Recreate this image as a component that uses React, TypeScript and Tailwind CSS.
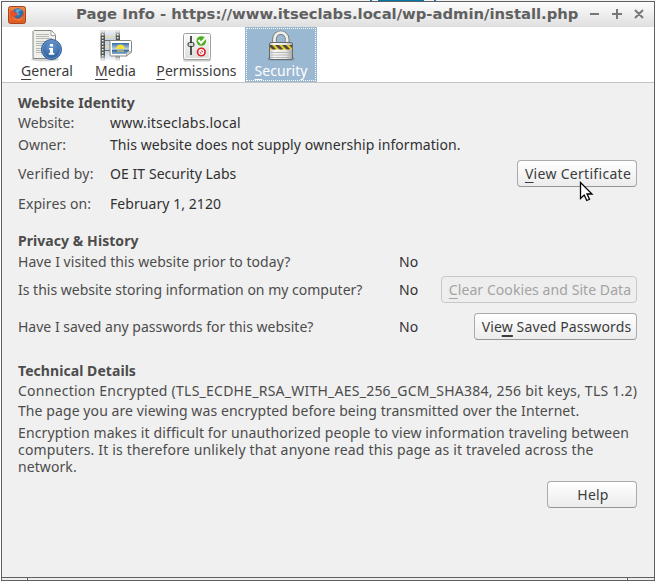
import type { ReactNode } from 'react';

function Key({ children, thick }: { children: ReactNode; thick?: boolean }) {
  return <span className={`underline underline-offset-[3px] ${thick ? 'decoration-2' : 'decoration-1'}`}>{children}</span>;
}

function FirefoxIcon() {
  return (
    <svg width="18" height="18" viewBox="0 0 18 18" className="shrink-0">
      <defs>
        <linearGradient id="ffbg" x1="0" y1="0" x2="0" y2="1">
          <stop offset="0" stopColor="#ef8a45" />
          <stop offset="1" stopColor="#dc5a22" />
        </linearGradient>
      </defs>
      <rect x="0.5" y="0.5" width="17" height="17" rx="2" fill="url(#ffbg)" stroke="#a8441f" />
      <circle cx="9.800" cy="8.500" r="6.200" fill="#2f6ea6" />
      <path d="M7 4c2-1.500 5-1.500 7 .5-1.500-.3-3 .5-3.500 2L12 8.500l-2.500 1L8 6z" fill="#5ba3d6" />
      <path d="M2.500 3.500L4 5l2-.5.800 2 3.200 1-1.500 2-2 .8c1.200 2.500 4 2.700 6 1.300 2-1.400 3-4 2.500-6.600 2 3.500 1 8-2.500 9.600-4.500 2-9.500-.5-10.200-5.100C2 7.500 2 5.500 2.500 3.500z" fill="#e5502a" />
      <path d="M3.500 10c1 3.500 5 5.500 9 4 2-1 3-3 3-5-1 3-4 5-7 4.200-2-.5-3-1.700-5-3.200z" fill="#f08a38" />
    </svg>
  );
}

function GeneralIcon() {
  return (
    <svg width="32" height="33" viewBox="0 0 32 33">
      <defs>
        <radialGradient id="info" cx=".5" cy=".3" r=".7">
          <stop offset="0" stopColor="#6c9bd2" />
          <stop offset="1" stopColor="#285895" />
        </radialGradient>
      </defs>
      <ellipse cx="14" cy="30.500" rx="14" ry="1.800" fill="#000" opacity=".18" />
      <path d="M3 1.500h17.500L24.500 6v23.500H2V2.500z" fill="#eff0ec" stroke="#858780" />
      <path d="M20 2v4.500h4.500" fill="#fff" stroke="#a1a39c" />
      <path d="M5 5.500h13M5 7.500h13M5 9.500h16M5 12.500h16M5 14.500h16M5 16.500h9M5 19.500h16M5 21.500h10M5 23.500h10" stroke="#b6b9b1" />
      <circle cx="20.500" cy="20.500" r="10" fill="url(#info)" stroke="#285492" />
      <circle cx="20.500" cy="20.500" r="9" fill="none" stroke="#7ba5d8" strokeWidth=".7" />
      <path d="M19 15h3v2.500h-3zM18 19h4v5h1.300v1.700h-5.500V24H19v-3.400h-1z" fill="#fff" />
    </svg>
  );
}

function MediaIcon() {
  return (
    <svg width="34" height="33" viewBox="0 0 34 33">
      <defs>
        <linearGradient id="film" x1="0" y1="0" x2="0" y2="1">
          <stop offset="0" stopColor="#888a85" stopOpacity=".15" />
          <stop offset=".2" stopColor="#555753" />
          <stop offset=".8" stopColor="#555753" />
          <stop offset="1" stopColor="#888a85" stopOpacity=".1" />
        </linearGradient>
        <linearGradient id="frames" x1="0" y1="0" x2="0" y2="1">
          <stop offset="0" stopColor="#c6d3e3" stopOpacity=".3" />
          <stop offset=".3" stopColor="#c6d3e3" />
          <stop offset=".7" stopColor="#c6d3e3" />
          <stop offset="1" stopColor="#c6d3e3" stopOpacity=".2" />
        </linearGradient>
        <linearGradient id="sky" x1="0" y1="0" x2="0" y2="1">
          <stop offset="0" stopColor="#326baa" />
          <stop offset=".58" stopColor="#c6dce7" />
          <stop offset=".62" stopColor="#2c6095" />
          <stop offset="1" stopColor="#8baecb" />
        </linearGradient>
      </defs>
      <path d="M1.500 1h4.500v31H1.500zM16.500 1h4.500v31h-4.500z" fill="url(#film)" />
      <path d="M3.700 2v29M18.700 2v29" stroke="#f1f2ef" strokeWidth="1.600" strokeDasharray="1.500 1.500" />
      <path d="M6 1h10.500v30H6z" fill="url(#frames)" />
      <path d="M6 8h10M6 18h7" stroke="#e1dba9" strokeWidth="1.500" />
      <path d="M6 11.500h10.500M6 21.500h10.500" stroke="#6d7073" />
      <path d="M12 11.500h19.500q1 0 1 1V23l-5 4H12q-1 0-1-1V12.500q0-1 1-1z" fill="#fff" stroke="#85877f" />
      <path d="M13 14h17v8l-3 3H13z" fill="url(#sky)" />
      <path d="M17 20a4.500 4.500 0 019 0z" fill="#f7df3b" />
      <path d="M18 22h7" stroke="#ecdc52" />
      <path d="M27.500 27l.5-4h4.500z" fill="#eee" stroke="#999b93" />
    </svg>
  );
}

function PermissionsIcon() {
  return (
    <svg width="30" height="30" viewBox="0 0 30 30" className="mt-[3px]">
      <defs>
        <linearGradient id="panel" x1="0" y1="0" x2="0" y2="1">
          <stop offset="0" stopColor="#fbfbfa" />
          <stop offset="1" stopColor="#dcdeda" />
        </linearGradient>
      </defs>
      <rect x="1" y="26" width="28" height="3.500" rx="2" fill="#ccc" />
      <rect x="1.500" y="1.500" width="27" height="26" rx="2" fill="url(#panel)" stroke="#9c9e98" />
      <rect x="2.500" y="2.500" width="25" height="24" rx="1" fill="none" stroke="#fff" />
      <path d="M9 4v19" stroke="#4c5254" strokeWidth="2" />
      <rect x="6" y="10.500" width="6" height="4" rx="1.500" fill="#d3d7cf" stroke="#2e3436" />
      <circle cx="19.300" cy="9" r="4.800" fill="#4eae20" />
      <path d="M16.500 8l2.500 3 4.500-5" fill="none" stroke="#fff" strokeWidth="2" />
      <circle cx="19.300" cy="20" r="4.600" fill="#d92027" />
      <circle cx="19.300" cy="20" r="2.300" fill="none" stroke="#fff" strokeWidth="1.200" />
      <path d="M17.500 18.300l3.500 3.500" stroke="#fff" strokeWidth="1.300" />
    </svg>
  );
}

function LockIcon() {
  return (
    <svg width="28" height="32" viewBox="0 0 28 32">
      <defs>
        <linearGradient id="body" x1="0" y1="0" x2="1" y2="0">
          <stop offset="0" stopColor="#c4c4c4" />
          <stop offset=".2" stopColor="#fafafa" />
          <stop offset=".7" stopColor="#e6e6e6" />
          <stop offset="1" stopColor="#a9a9a9" />
        </linearGradient>
        <clipPath id="band"><path d="M3 16h22v4.500H3z" /></clipPath>
      </defs>
      <rect x="0.500" y="28" width="27" height="3.500" rx="2" fill="#60798e" opacity=".5" />
      <path d="M7.500 14V10a6.300 6.300 0 0112.600 0V14" fill="none" stroke="#777a77" strokeWidth="4.600" />
      <path d="M7.500 14V10a6.300 6.300 0 0112.600 0V14" fill="none" stroke="#eeeeec" strokeWidth="2.800" />
      <rect x="2.500" y="13.500" width="23" height="17" rx="1.500" fill="url(#body)" stroke="#686a67" />
      <path d="M4 23.500h20M4 26h20M4 28.500h20" stroke="#a9aba8" strokeWidth=".8" />
      <g clipPath="url(#band)">
        <path d="M3 15h22v6H3z" fill="#e8c928" />
        <path d="M2 15l6 6M9 15l6 6M16 15l6 6M23 15l6 6" stroke="#4a4a42" strokeWidth="2.800" />
      </g>
    </svg>
  );
}

function Tool({ icon, label, width, active }: { icon: ReactNode; label: string; width: string; active?: boolean }) {
  return (
    <div className={`${width} h-[55px] shrink-0 ${active ? 'bg-[#9bb8d3] p-px text-white' : 'p-px text-[#3c3c3c]'}`}>
      <div className={`flex h-full flex-col items-center border border-dotted ${active ? 'border-white' : 'border-transparent'}`}>
        <div className="flex h-[32px] items-center justify-center">{icon}</div>
        <div className="text-[14px] leading-[19px] tracking-[0.05px] whitespace-nowrap">
          <Key>{label[0]}</Key>{label.slice(1)}
        </div>
      </div>
    </div>
  );
}

function Button({ children, width, disabled }: { children: ReactNode; width: string; disabled?: boolean }) {
  return (
    <button
      className={`${width} ml-auto flex h-[27px] shrink-0 items-center justify-center rounded-[4px] border pl-[2px] whitespace-nowrap ${
        disabled
          ? 'border-[#c8c8c8] bg-[#eeeeee] text-[#a3a3a3]'
          : 'border-[#aaaaaa] border-b-[#969696] bg-linear-to-b from-white to-[#ececec] text-[#3c3c3c]'
      }`}
    >
      {children}
    </button>
  );
}

function Row({ label, value, height, labelWidth, children }: { label: ReactNode; value: ReactNode; height: string; labelWidth: string; children?: ReactNode }) {
  return (
    <div className={`flex items-center ${height}`}>
      <div className={`${labelWidth} shrink-0`}>{label}</div>
      <div className="text-[#303030]">{value}</div>
      {children}
    </div>
  );
}

export default function App() {
  return (
    <div className="relative flex h-[582px] w-[656px] flex-col overflow-hidden bg-white pl-px font-['Noto_Sans',sans-serif] text-[14px] text-[#4c4c4c]">
      <div className="flex h-px shrink-0 bg-[#f4f4f4]">
        <div className="ml-[369px] h-px w-[2px] bg-[#0f76ac]" />
        <div className="ml-[6px] h-px w-[46px] bg-[#0076aa]" />
        <div className="ml-[10px] h-px w-[2px] bg-[#0f76ac]" />
      </div>
      <div className="flex h-[577px] w-[654px] shrink-0 flex-col border border-[#606060] bg-[#f0f0f0]">
        <header className="flex h-[25px] shrink-0 items-center bg-linear-to-b from-[#fdfdfd] to-[#dfdfdf] pl-[6px] text-[#606060]">
          <FirefoxIcon />
          <div className="-mt-px ml-[50px] w-[504px] font-['DejaVu_Sans',sans-serif] text-[14.8px] leading-[20px] font-bold whitespace-nowrap">
            Page Info - https://www.itseclabs.local/wp-admin/install.php
          </div>
          <svg width="60" height="14" viewBox="0 0 60 14" className="-mt-[2px] ml-[8px]" stroke="#777" strokeWidth="2" fill="none">
            <path d="M2 7h9M24 7h10M29 2v10M47 3l8 8M55 3l-8 8" />
          </svg>
        </header>
        <nav className="flex h-[56px] shrink-0 border-b border-[#c4c4c4] bg-white pl-[9px]">
          <Tool icon={<GeneralIcon />} label="General" width="w-[72px]" />
          <Tool icon={<MediaIcon />} label="Media" width="w-[65px]" />
          <Tool icon={<PermissionsIcon />} label="Permissions" width="w-[97px]" />
          <Tool icon={<LockIcon />} label="Security" width="w-[72px]" active />
        </nav>
        <main className="flex flex-col pt-[10px] pr-[17px] pl-[16px] whitespace-nowrap">
          <section className="pb-[16px]">
            <h2 className="h-[19px] leading-[20px] font-bold tracking-[0.06px]">Website Identity</h2>
            <Row height="h-[20px]" labelWidth="w-[92px]" label="Website:" value={<span className="tracking-[0.2px]">www.itseclabs.local</span>} />
            <Row height="h-[24px]" labelWidth="w-[92px]" label="Owner:" value={<span className="tracking-[0.06px]">This website does not supply ownership information.</span>} />
            <Row height="h-[35px]" labelWidth="w-[92px]" label={<span className="tracking-[0.2px]">Verified by:</span>} value={<span className="tracking-[0.06px]">OE IT Security Labs</span>}>
              <Button width="w-[120px]"><span className="tracking-[0.3px]"><Key>V</Key>iew Certificate</span></Button>
            </Row>
            <Row height="h-[24px]" labelWidth="w-[92px]" label={<span className="tracking-[0.1px]">Expires on:</span>} value={<span className="tracking-[0.06px]">February 1, 2120</span>} />
          </section>
          <section className="pb-[16px]">
            <h2 className="h-[20px] leading-[20px] font-bold tracking-[0.06px]">Privacy &amp; History</h2>
            <Row height="h-[20px]" labelWidth="w-[381px]" label={<span className="tracking-[0.05px]">Have I visited this website prior to today?</span>} value="No" />
            <Row height="h-[36px]" labelWidth="w-[381px]" label="Is this website storing information on my computer?" value="No">
              <Button width="w-[196px]" disabled><span className="tracking-[0.07px]"><Key>C</Key>lear Cookies and Site Data</span></Button>
            </Row>
            <Row height="h-[38px]" labelWidth="w-[381px]" label="Have I saved any passwords for this website?" value="No">
              <Button width="w-[163px]"><span className="tracking-[0.12px]">Vie<Key thick>w</Key> Saved Passwords</span></Button>
            </Row>
          </section>
          <section className="leading-[20px]">
            <h2 className="font-bold tracking-[0.06px]">Technical Details</h2>
            <p className="tracking-[0.24px]">Connection Encrypted (TLS_ECDHE_RSA_WITH_AES_256_GCM_SHA384, 256 bit keys, TLS 1.2)</p>
            <p className="tracking-[0.085px]">The page you are viewing was encrypted before being transmitted over the Internet.</p>
            <div className="mt-[3px] leading-[17px]">
              <p className="tracking-[0.12px]">Encryption makes it difficult for unauthorized people to view information traveling between</p>
              <p className="tracking-[0.17px]">computers. It is therefore unlikely that anyone read this page as it traveled across the</p>
              <p className="tracking-[0.08px]">network.</p>
            </div>
          </section>
          <div className="mt-[6px] flex"><Button width="w-[90px]"><span className="tracking-[0.2px]">Help</span></Button></div>
        </main>
      </div>
      <div className="flex h-[3px] w-[654px] shrink-0 border-x border-b border-[#606060] bg-[#eeeeee]">
        <div className="h-[2px] w-[25px]" />
        <div className="h-[2px] w-px bg-[#606060]" />
        <div className="h-[2px] w-[599px]" />
        <div className="h-[2px] w-px bg-[#606060]" />
      </div>
      <svg className="absolute top-[181px] left-[579px]" width="15" height="22" viewBox="0 0 15 22">
        <path d="M1.500 1.500v16l3.700-3.500 2.600 5.500 2.700-1.200-2.500-5.300h5z" fill="#fff" stroke="#000" strokeWidth="1.300" />
      </svg>
    </div>
  );
}
